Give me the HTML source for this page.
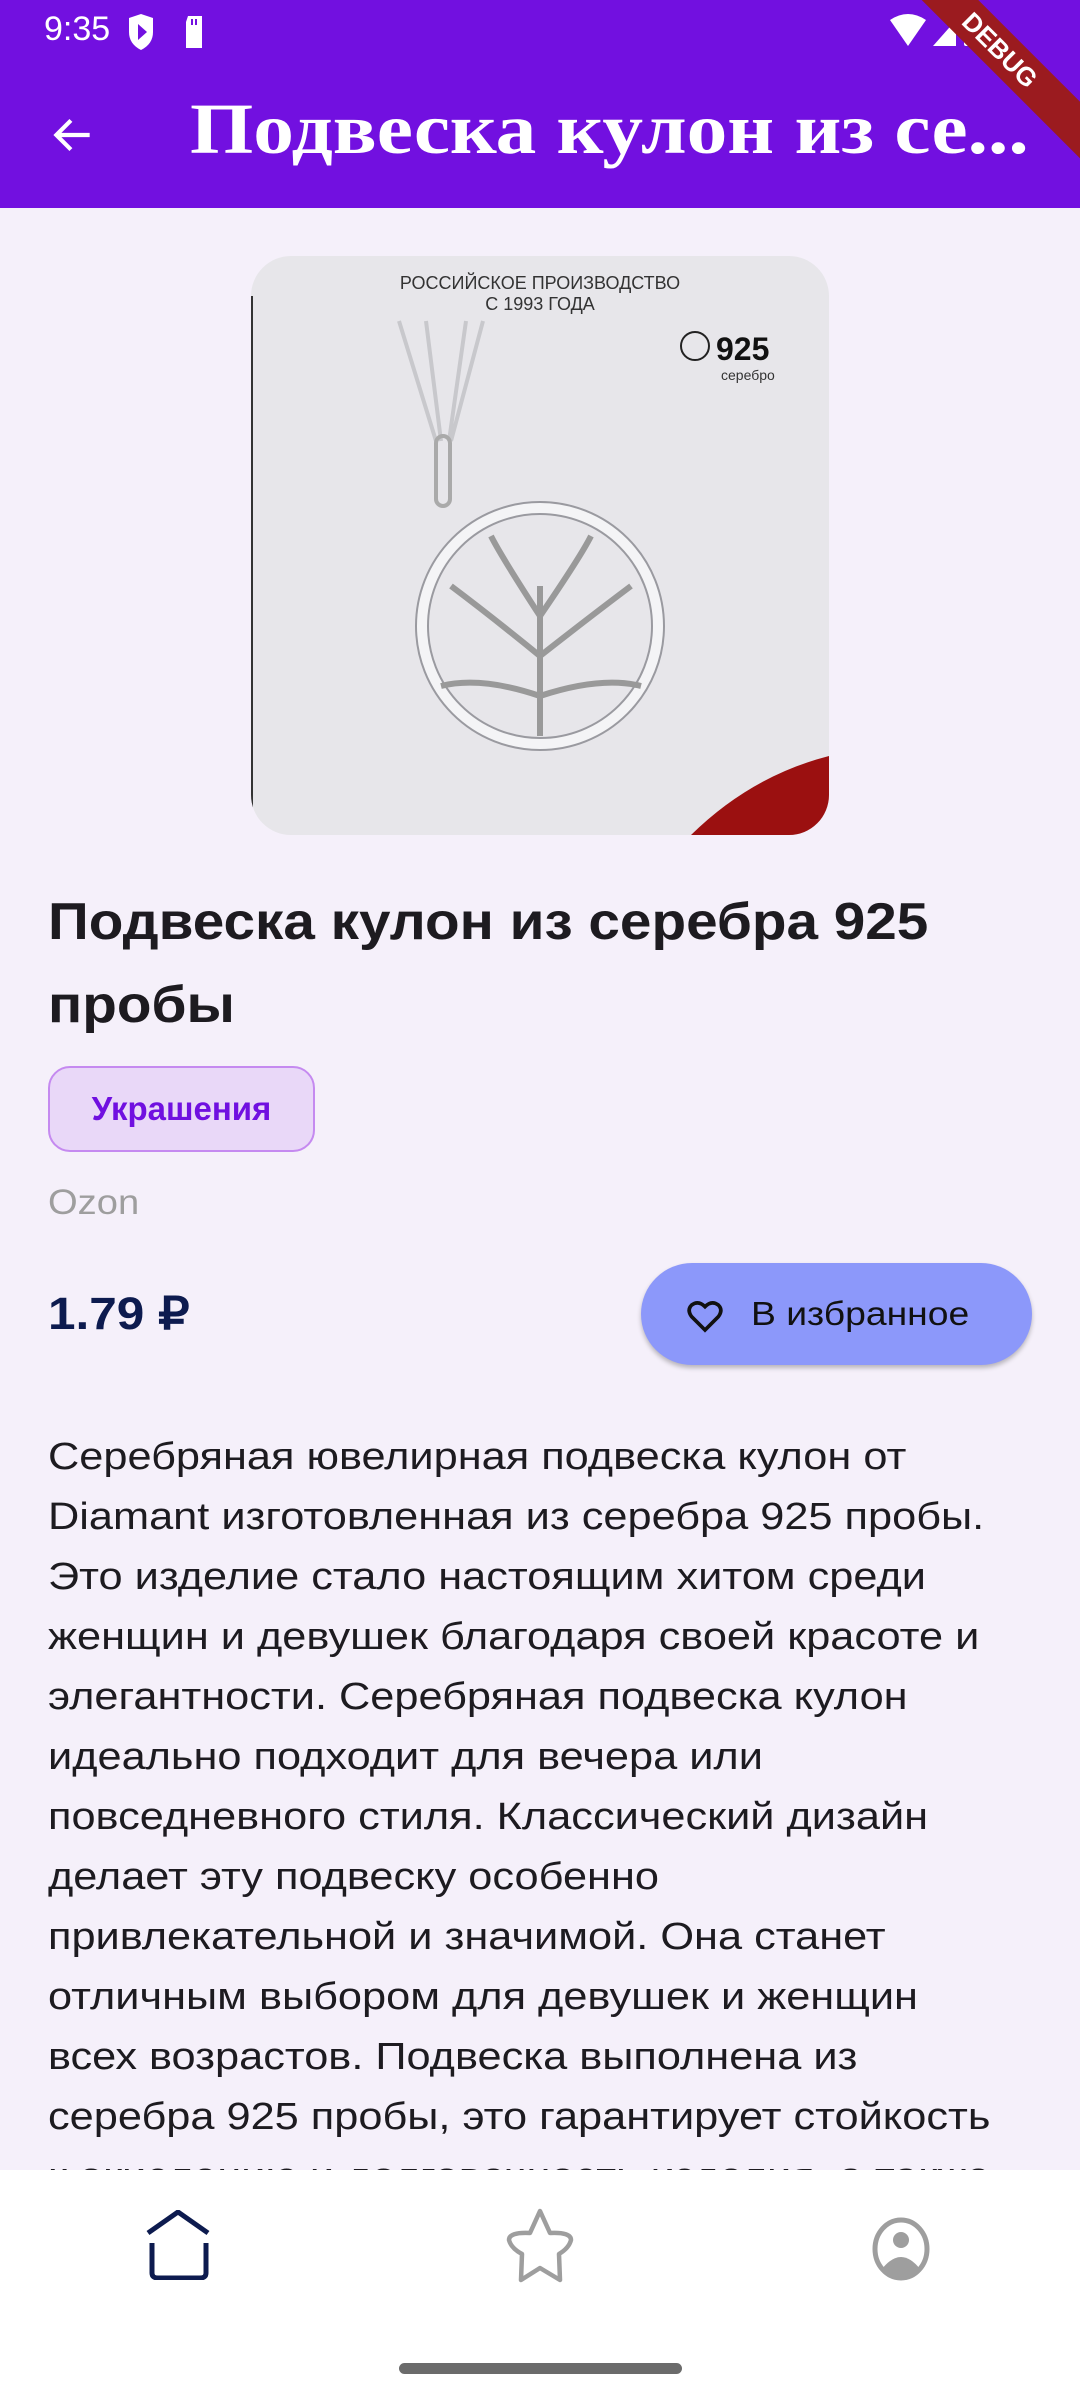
<!DOCTYPE html>
<html><head><meta charset="utf-8">
<style>
*{margin:0;padding:0;box-sizing:border-box}
body{width:1080px;height:2400px;background:#F5F0FA;font-family:"Liberation Sans","Noto Sans CJK SC",sans-serif;position:relative;overflow:hidden}
.top{position:absolute;left:0;top:0;width:1080px;height:208px;background:#7210E0}
.st{position:absolute;top:10px;left:44px;color:#fff;font-size:34px}
.title{position:absolute;left:190px;top:88px;color:#fff;font-family:"Liberation Serif",serif;font-weight:bold;font-size:72px;white-space:nowrap;transform:scaleX(1.13);transform-origin:left}
.line{position:absolute;left:48px;white-space:nowrap;transform-origin:left;transform:scaleX(1.14)}
.desc{font-size:38px;color:#1d1b20}
.nav{position:absolute;left:0;top:2170px;width:1080px;height:230px;background:#fff}
</style></head><body>
<div class="top">
  <div class="st">9:35</div>
  <svg style="position:absolute;left:126px;top:14px" width="90" height="40" viewBox="0 0 90 40">
    <path d="M3 4 L15 0 L27 4 V18 Q27 30 15 36 Q3 30 3 18Z" fill="#fff"/><path d="M12 10 L21 18 L12 26Z" fill="#7210E0"/>
    <path d="M62 2 H76 V34 H60 V8Z" fill="#fff"/><rect x="65" y="5" width="2" height="6" fill="#7210E0"/><rect x="69" y="5" width="2" height="6" fill="#7210E0"/>
  </svg>
  <svg style="position:absolute;left:888px;top:12px" width="110" height="40" viewBox="0 0 110 40">
    <path d="M2 8 Q20 -4 38 8 L20 34Z" fill="#fff"/><path d="M45 34 L68 8 V34Z" fill="#fff"/><rect x="76" y="4" width="14" height="30" rx="2" fill="#fff"/>
  </svg>
  <svg style="position:absolute;left:48px;top:110px" width="50" height="50" viewBox="0 0 24 24"><path d="M20 12H5M11 5l-7 7 7 7" stroke="#fff" stroke-width="2" fill="none"/></svg>
  <div class="title">Подвеска кулон из се...</div>
</div>
<div style="position:absolute;right:-70px;top:30px;width:300px;height:40px;background:#9B1B1F;transform:rotate(45deg);transform-origin:center;color:#fff;font-weight:bold;font-size:26px;text-align:center;line-height:40px;">DEBUG</div>

<div style="position:absolute;left:251px;top:256px;width:578px;height:579px;border-radius:40px;overflow:hidden;background:#E7E6EA">
 <svg width="578" height="579" viewBox="0 0 578 579">
  <rect x="0" y="40" width="2" height="530" fill="#333"/>
  <text x="289" y="33" font-family="Liberation Sans" font-size="18" fill="#333" text-anchor="middle">РОССИЙСКОЕ ПРОИЗВОДСТВО</text>
  <text x="289" y="54" font-family="Liberation Sans" font-size="18" fill="#333" text-anchor="middle">С 1993 ГОДА</text>
  <circle cx="444" cy="90" r="14" fill="none" stroke="#222" stroke-width="2"/>
  <text x="465" y="104" font-family="Liberation Sans" font-weight="bold" font-size="32" fill="#111">925</text>
  <text x="470" y="124" font-family="Liberation Sans" font-size="14" fill="#333">серебро</text>
  <path d="M148 65 L185 185 M175 65 L190 185 M215 65 L198 185 M232 65 L200 185" stroke="#c8c8cc" stroke-width="4" fill="none"/>
  <rect x="185" y="180" width="14" height="70" rx="7" fill="none" stroke="#aaa" stroke-width="4"/>
  <circle cx="289" cy="370" r="118" fill="none" stroke="#9a9aa0" stroke-width="14"/>
  <circle cx="289" cy="370" r="118" fill="none" stroke="#f4f4f6" stroke-width="10"/>
  <path d="M289 480 V330 M289 400 Q240 360 200 330 M289 400 Q340 360 380 330 M289 360 Q250 300 240 280 M289 360 Q330 300 340 280 M289 440 Q230 420 190 430 M289 440 Q350 420 390 430" stroke="#999" stroke-width="6" fill="none"/>
  <path d="M578 500 L578 579 L440 579 Q500 520 578 500Z" fill="#9B1010"/>
 </svg>
</div>

<div class="line" style="top:892px;font-size:52px;font-weight:bold;color:#1d1b20;transform:scaleX(1.09)">Подвеска кулон из серебра 925</div>
<div class="line" style="top:975px;font-size:52px;font-weight:bold;color:#1d1b20;transform:scaleX(1.09)">пробы</div>
<div style="position:absolute;left:48px;top:1066px;width:267px;height:86px;border-radius:22px;background:#E9D8F8;border:2px solid #C58AF0;color:#7010E0;font-weight:bold;font-size:33px;line-height:82px;text-align:center">Украшения</div>
<div class="line" style="top:1183px;font-size:35px;color:#9e9e9e;transform:scaleX(1.09)">Ozon</div>
<div class="line" style="top:1287px;font-size:45px;font-weight:bold;color:#0D1B4F;transform:scaleX(1.1)">1.79 ₽</div>
<div style="position:absolute;left:641px;top:1263px;width:391px;height:102px;border-radius:51px;background:#8C98FA;box-shadow:0 3px 5px rgba(0,0,0,.25)">
  <svg style="position:absolute;left:44px;top:32px" width="40" height="40" viewBox="0 0 24 24"><path d="M12 21 L4 13 Q1 9 4 6 Q8 3 12 7 Q16 3 20 6 Q23 9 20 13Z" fill="none" stroke="#111" stroke-width="2.2"/></svg>
  <div style="position:absolute;left:110px;top:32px;font-size:33px;color:#111;white-space:nowrap;transform:scaleX(1.13);transform-origin:left">В избранное</div>
</div>

<div class="line desc" style="top:1436px">Серебряная ювелирная подвеска кулон от</div>
<div class="line desc" style="top:1496px">Diamant изготовленная из серебра 925 пробы.</div>
<div class="line desc" style="top:1556px">Это изделие стало настоящим хитом среди</div>
<div class="line desc" style="top:1616px">женщин и девушек благодаря своей красоте и</div>
<div class="line desc" style="top:1676px">элегантности. Серебряная подвеска кулон</div>
<div class="line desc" style="top:1736px">идеально подходит для вечера или</div>
<div class="line desc" style="top:1796px">повседневного стиля. Классический дизайн</div>
<div class="line desc" style="top:1856px">делает эту подвеску особенно</div>
<div class="line desc" style="top:1916px">привлекательной и значимой. Она станет</div>
<div class="line desc" style="top:1976px">отличным выбором для девушек и женщин</div>
<div class="line desc" style="top:2036px">всех возрастов. Подвеска выполнена из</div>
<div class="line desc" style="top:2096px">серебра 925 пробы, это гарантирует стойкость</div>
<div class="line desc" style="top:2156px">к окислению и долговечность изделия, а также</div>

<div class="nav">
  <svg style="position:absolute;left:144px;top:40px" width="70" height="70" viewBox="0 0 70 70"><path d="M4 23 L34 2 L64 23 M8 33 V63 Q8 68 14 68 H56 Q62 68 62 63 V33" fill="none" stroke="#0D1B4F" stroke-width="5"/></svg>
  <svg style="position:absolute;left:505px;top:38px" width="70" height="76" viewBox="0 0 70 76"><path d="M35 3 L45 25 Q66 24 66 32 Q64 40 54 46 L55 72 L35 60 L16 72 L17 46 Q6 40 4 32 Q4 24 25 25Z" fill="none" stroke="#9e9e9e" stroke-width="4.5" stroke-linejoin="round"/></svg>
  <svg style="position:absolute;left:871px;top:47px" width="60" height="64" viewBox="0 0 60 64"><ellipse cx="30" cy="32" rx="26" ry="29" fill="none" stroke="#9e9e9e" stroke-width="5"/><circle cx="30" cy="23" r="8" fill="#9e9e9e"/><path d="M11 52 Q30 28 49 52 Q30 66 11 52Z" fill="#9e9e9e"/></svg>
  <div style="position:absolute;left:399px;top:193px;width:283px;height:11px;border-radius:6px;background:#6b6b6b"></div>
</div>
</body></html>
